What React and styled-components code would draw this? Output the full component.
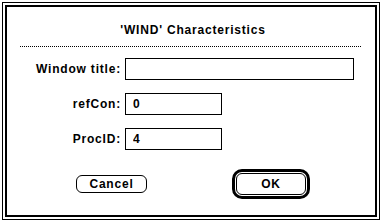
import React from 'react';
import styled, { createGlobalStyle } from 'styled-components';

const GlobalStyle = createGlobalStyle`
  html, body {
    margin: 0;
    padding: 0;
    background: #fff;
  }
  body {
    font-family: "Liberation Sans", Arial, sans-serif;
    font-weight: bold;
    font-size: 12px;
    letter-spacing: 0.8px;
    color: #000;
  }
`;

const Dialog = () => {
    return (
        <Window>
            <Frame>
                <Title>'WIND' Characteristics</Title>
                <Separator />
                <Form>
                    <Label>Window title:</Label>
                    <Field width={229} />
                    <Label>refCon:</Label>
                    <Field width={97} defaultValue="0" />
                    <Label>ProcID:</Label>
                    <Field width={97} defaultValue="4" />
                </Form>
                <Buttons>
                    <Button>Cancel</Button>
                    <DefaultRing>
                        <Button wide>OK</Button>
                    </DefaultRing>
                </Buttons>
            </Frame>
        </Window>
    )
}

const Window = styled.div`
    margin: 2px 0 0 2px;
    width: 378px;
    height: 218px;
    box-sizing: border-box;
    border: 1px solid #000;
    padding: 2px;
`;

const Frame = styled.div`
    height: 100%;
    box-sizing: border-box;
    border: 2px solid #000;
    display: flex;
    flex-direction: column;
`;

const Title = styled.div`
    text-align: center;
    line-height: 16px;
    margin-top: 15px;
    padding-left: 4px;
`;

const Separator = styled.div`
    height: 1px;
    margin: 8px 0 0 13px;
    width: 342px;
    background: repeating-linear-gradient(90deg, #000 0 1px, transparent 1px 2px);
`;

const Form = styled.div`
    display: grid;
    grid-template-columns: 114px auto;
    column-gap: 4px;
    row-gap: 13px;
    align-items: center;
    justify-items: start;
    margin-top: 11px;
`;

const Label = styled.div`
    justify-self: end;
    line-height: 16px;
`;

const Field = styled.input.attrs({ type: 'text' })`
    width: ${props => props.width}px;
    height: 22px;
    box-sizing: border-box;
    border: 1px solid #000;
    border-radius: 0;
    padding: 0 0 0 7px;
    margin: 0;
    font: inherit;
    letter-spacing: inherit;
    color: #000;
    background: #fff;
    outline: none;
`;

const Buttons = styled.div`
    display: flex;
    align-items: center;
    margin-top: 19px;
    padding-left: 69px;
    gap: 85px;
`;

const Button = styled.div`
    width: ${props => props.wide ? 70 : 71}px;
    height: ${props => props.wide ? 22 : 18}px;
    box-sizing: border-box;
    border: 1px solid #000;
    border-radius: 6px;
    display: flex;
    align-items: center;
    justify-content: center;
    line-height: 16px;
    background: #fff;
`;

const DefaultRing = styled.div`
    padding: 1px;
    border: 3px solid #000;
    border-radius: 10px;
`;

export default function App() {
    return (
        <>
            <GlobalStyle />
            <Dialog />
        </>
    );
}
